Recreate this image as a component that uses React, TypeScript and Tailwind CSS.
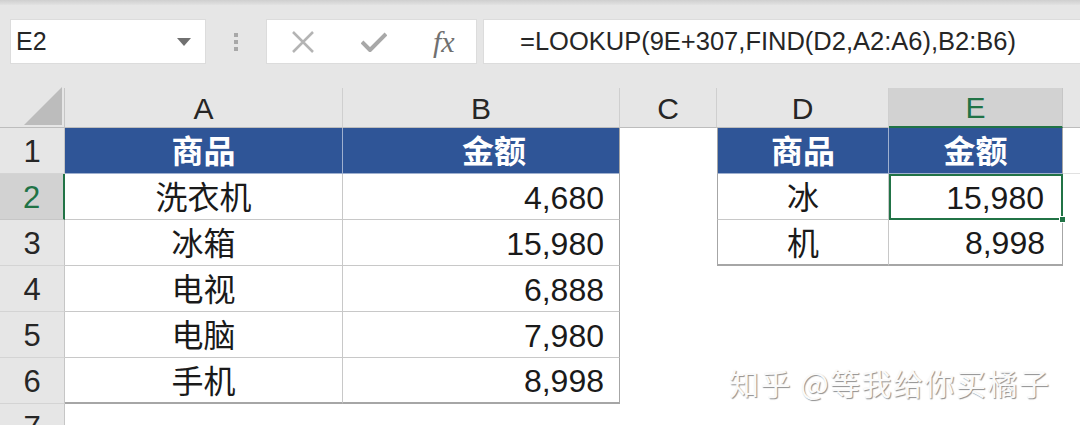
import React from "react";

const cjk = { fontFamily: '"Liberation Sans", "Noto Sans CJK SC", sans-serif' };

const left: [string, string][] = [
  ["洗衣机", "4,680"],
  ["冰箱", "15,980"],
  ["电视", "6,888"],
  ["电脑", "7,980"],
  ["手机", "8,998"],
];

function ColHead({ label, selected, last }: { label: string; selected?: boolean; last?: boolean }) {
  return (
    <div
      className={
        "flex items-center justify-center text-[30px] leading-none " +
        (selected
          ? "bg-[#d2d2d2] text-[#217346] border-b-2 border-b-[#217346] border-r border-r-[#c6c6c6]"
          : "bg-[#e6e6e6] text-[#262626] border-b border-b-[#bdbdbd] " + (last ? "" : "border-r border-r-[#cfcfcf]"))
      }
    >
      <span className="pt-[2px]">{label}</span>
    </div>
  );
}

function RowHead({ n, selected }: { n: number; selected?: boolean }) {
  return (
    <div
      className={
        "flex items-center justify-center text-[31px] leading-none pt-[2px] " +
        (selected
          ? "bg-[#d2d2d2] text-[#217346] border-r-2 border-r-[#217346] border-b border-b-[#c6c6c6]"
          : "bg-[#e6e6e6] text-[#262626] border-r border-r-[#c6c6c6] border-b border-b-[#d4d4d4]")
      }
    >
      {n}
    </div>
  );
}

export default function App() {
  return (
    <div className="relative w-[1080px] h-[425px] overflow-hidden bg-white" style={cjk}>
      {/* toolbar */}
      <div className="h-[88px] bg-[#e6e6e6] flex flex-col">
        <div className="h-[5px] bg-gradient-to-b from-[#cfcfcf] to-[#e2e2e2]" />
        <div className="flex items-center mt-[14px] h-[45px]">
          <div className="ml-[10px] w-[196px] h-[45px] bg-white border border-[#dcdcdc] flex items-center justify-between pl-[5px] pr-[14px]">
            <span className="text-[25px] text-[#262626] leading-none">E2</span>
            <svg width="14" height="8" viewBox="0 0 14 8">
              <path d="M0 0 L14 0 L7 8 Z" fill="#707070" />
            </svg>
          </div>
          <div className="w-[60px] flex flex-col items-center gap-[3px]">
            <div className="w-[4px] h-[4px] bg-[#a8a8a8]" />
            <div className="w-[4px] h-[4px] bg-[#a8a8a8]" />
            <div className="w-[4px] h-[4px] bg-[#a8a8a8]" />
          </div>
          <div className="w-[211px] h-[45px] bg-white border border-[#dcdcdc] flex items-center">
            <svg className="ml-[24px]" width="24" height="24" viewBox="0 0 24 24">
              <path d="M2 2 L22 22 M22 2 L2 22" stroke="#b4b4b4" strokeWidth="2.5" fill="none" />
            </svg>
            <svg className="ml-[46px]" width="26" height="22" viewBox="0 0 26 22">
              <path d="M1 11 L9 19 L25 3" stroke="#a8a8a8" strokeWidth="4" fill="none" strokeLinejoin="round" />
            </svg>
            <span
              className="ml-[46px] text-[30px] italic text-[#707070] leading-none"
              style={{ fontFamily: '"Liberation Serif", serif' }}
            >
              fx
            </span>
          </div>
          <div className="ml-[6px] flex-1 h-[45px] bg-white border-y border-l border-[#dcdcdc] flex items-center pl-[36px]">
            <span className="text-[25.5px] text-[#262626] leading-none">
              =LOOKUP(9E+307,FIND(D2,A2:A6),B2:B6)
            </span>
          </div>
        </div>
      </div>

      {/* grid */}
      <div className="grid grid-cols-[65px_278px_277px_97px_172px_174px_17px] grid-rows-[40px_46px_46px_46px_46px_46px_46px_46px]">
        {/* header row */}
        <div className="bg-[#e6e6e6] border-r border-r-[#c6c6c6] border-b border-b-[#bdbdbd] flex items-end justify-end p-[2px]">
          <svg width="38" height="38" viewBox="0 0 38 38">
            <path d="M38 0 L38 38 L0 38 Z" fill="#bcbcbc" />
          </svg>
        </div>
        <ColHead label="A" />
        <ColHead label="B" />
        <ColHead label="C" />
        <ColHead label="D" />
        <ColHead label="E" selected />
        <ColHead label="" last />

        {/* row 1 */}
        <RowHead n={1} />
        <div className="bg-[#2f5597] text-white font-bold text-[32px] flex items-center justify-center pt-[2px] border-r border-r-[#9fb0cf] border-b border-b-[#9fb0cf]">
          商品
        </div>
        <div className="bg-[#2f5597] text-white font-bold text-[32px] flex items-center justify-end pr-[15px] pt-[2px] border-r border-r-[#a6a6a6] border-b border-b-[#9fb0cf]">
          <span className="mr-[78px]">金额</span>
        </div>
        <div className="bg-white" />
        <div className="bg-[#2f5597] text-white font-bold text-[32px] flex items-center justify-center pt-[2px] border-l border-l-[#a6a6a6] border-r border-r-[#9fb0cf] border-b border-b-[#9fb0cf]">
          商品
        </div>
        <div className="bg-[#2f5597] text-white font-bold text-[32px] flex items-center justify-center pt-[2px] border-r border-r-[#a6a6a6] border-b border-b-[#9fb0cf]">
          金额
        </div>
        <div className="bg-white border-b border-b-[#e1e1e1]" />

        {/* rows 2-6 */}
        {left.map(([name, amt], i) => {
          const r = i + 2;
          const isLast = r === 6;
          const rb = isLast ? "border-b-2 border-b-[#a6a6a6]" : "border-b border-b-[#c8c8c8]";
          return (
            <React.Fragment key={r}>
              <RowHead n={r} selected={r === 2} />
              <div className={"text-[32px] text-[#1a1a1a] flex items-center justify-center pt-[3px] border-r border-r-[#c8c8c8] " + rb}>
                {name}
              </div>
              <div className={"text-[32px] text-[#1a1a1a] flex items-center justify-end pr-[15px] pt-[2px] border-r border-r-[#a6a6a6] " + rb}>
                {amt}
              </div>
              <div className="bg-white" />
              {r === 2 && (
                <>
                  <div className="text-[32px] text-[#1a1a1a] flex items-center justify-center pt-[3px] border-l border-l-[#a6a6a6] border-r border-r-[#c8c8c8] border-b border-b-[#c8c8c8]">
                    冰
                  </div>
                  <div className="relative text-[32px] text-[#1a1a1a] flex items-center justify-end pr-[17px] pt-[2px] border-2 border-[#217346]">
                    15,980
                    <div className="absolute right-[-5px] bottom-[-5px] w-[7px] h-[7px] bg-[#217346] border border-white" />
                  </div>
                </>
              )}
              {r === 3 && (
                <>
                  <div className="text-[32px] text-[#1a1a1a] flex items-center justify-center pt-[3px] border-l border-l-[#a6a6a6] border-r border-r-[#c8c8c8] border-b-2 border-b-[#a6a6a6]">
                    机
                  </div>
                  <div className="text-[32px] text-[#1a1a1a] flex items-center justify-end pr-[17px] pt-[2px] border-r border-r-[#a6a6a6] border-b-2 border-b-[#a6a6a6]">
                    8,998
                  </div>
                </>
              )}
              {r > 3 && (
                <>
                  <div className="bg-white" />
                  <div className="bg-white" />
                </>
              )}
              <div className="bg-white" />
            </React.Fragment>
          );
        })}

        {/* row 7 */}
        <div className="bg-[#e6e6e6] border-r border-r-[#c6c6c6] flex items-start justify-center text-[31px] text-[#262626] leading-none pt-[8px]">
          7
        </div>
        <div className="col-span-6 bg-white" />
      </div>

      {/* watermark */}
      <div
        className="absolute left-[729px] top-[360px] text-[30px] text-[#fafafa] tracking-[1.5px]"
        style={{ fontFamily: '"Noto Sans CJK SC", sans-serif', textShadow: "1px 1px 1px #8f8f8f" }}
      >
        知乎 @等我给你买橘子
      </div>
    </div>
  );
}
